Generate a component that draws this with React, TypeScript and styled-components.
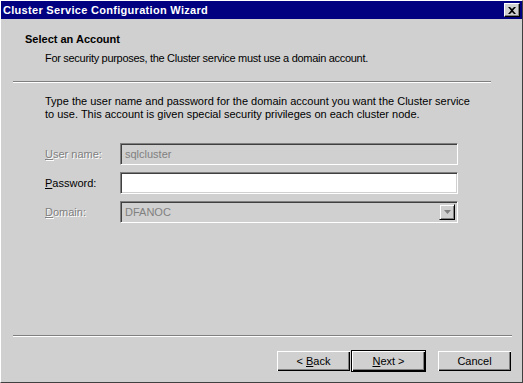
import React from "react";
import styled, { createGlobalStyle } from "styled-components";

const Global = createGlobalStyle`
  html, body { margin: 0; padding: 0; background: #d0d0d0; }
  body { font-family: "Liberation Sans", Arial, sans-serif; font-size: 11px; color: #000; }
  * { box-sizing: border-box; }
`;

const Window = styled.div`
  width: 523px;
  height: 383px;
  background: #d0d0d0;
  border-left: 1px solid #ffffff;
  border-top: 1px solid #ffffff;
  border-right: 1px solid #404040;
  border-bottom: 1px solid #404040;
  display: flex;
  flex-direction: column;
`;

const TitleBar = styled.div`
  height: 18px;
  background: #000080;
  display: flex;
  align-items: center;
  justify-content: space-between;
  padding: 0 2px 0 2px;
`;

const Title = styled.div`
  color: #fff;
  font-weight: bold;
  font-size: 11px;
  letter-spacing: 0.3px;
`;

const CloseButton = styled.div`
  width: 16px;
  height: 14px;
  background: #d0d0d0;
  border-top: 1px solid #fff;
  border-left: 1px solid #fff;
  border-right: 1px solid #000;
  border-bottom: 1px solid #000;
  box-shadow: inset -1px -1px 0 #808080;
  display: flex;
  align-items: center;
  justify-content: center;
`;

const Header = styled.div`
  padding: 14px 0 0 24px;
  height: 62px;
`;

const HeaderTitle = styled.div`
  font-weight: bold;
  font-size: 11px;
  line-height: 13px;
`;

const HeaderSub = styled.div`
  margin-top: 6px;
  padding-left: 20px;
  line-height: 13px;
  letter-spacing: -0.3px;
`;

const Separator = styled.div<{ $right: number }>`
  margin: 0 ${(p) => p.$right}px 0 12px;
  height: 2px;
  border-top: 1px solid #808080;
  border-bottom: 1px solid #ffffff;
`;

const Body = styled.div`
  flex: 1;
  padding: 12px 0 0 44px;
`;

const Intro = styled.div`
  line-height: 13px;
  width: 436px;
`;

const Form = styled.div`
  margin-top: 22px;
  display: grid;
  grid-template-columns: 75px 338px;
  row-gap: 7px;
  align-items: center;
`;

const Label = styled.div<{ $disabled?: boolean }>`
  color: ${(p) => (p.$disabled ? "#808080" : "#000")};
  text-shadow: ${(p) => (p.$disabled ? "1px 1px 0 #fff" : "none")};
  u { text-decoration: underline; }
`;

const Field = styled.div<{ $disabled?: boolean }>`
  height: 22px;
  background: ${(p) => (p.$disabled ? "#d0d0d0" : "#fff")};
  border-top: 1px solid #808080;
  border-left: 1px solid #808080;
  border-right: 1px solid #fff;
  border-bottom: 1px solid #fff;
  box-shadow: inset 1px 1px 0 #404040, inset -1px -1px 0 #d0d0d0;
  color: #808080;
  display: flex;
  align-items: center;
  justify-content: space-between;
  padding: 0 2px 0 4px;
`;

const DropButton = styled.div`
  width: 16px;
  height: 16px;
  background: #d0d0d0;
  border-top: 1px solid #d0d0d0;
  border-left: 1px solid #d0d0d0;
  border-right: 1px solid #000;
  border-bottom: 1px solid #000;
  box-shadow: inset 1px 1px 0 #fff, inset -1px -1px 0 #808080;
  display: flex;
  align-items: center;
  justify-content: center;
`;

const Footer = styled.div`
  height: 45px;
  display: flex;
  justify-content: flex-end;
  align-items: flex-start;
  padding: 13px 10px 0 0;
`;

const Button = styled.div<{ $default?: boolean; $gap?: number }>`
  width: 75px;
  height: 22px;
  margin-left: ${(p) => p.$gap ?? 0}px;
  display: flex;
  align-items: center;
  justify-content: center;
  background: #d0d0d0;
  border: 1px solid ${(p) => (p.$default ? "#000" : "transparent")};
  box-shadow: inset 1px 1px 0 #fff, inset -1px -1px 0 #000, inset -2px -2px 0 #808080;
`;

export default function App() {
  return (
    <>
      <Global />
      <Window>
        <TitleBar>
          <Title>Cluster Service Configuration Wizard</Title>
          <CloseButton>
            <svg width="8" height="7" viewBox="0 0 8 7">
              <path d="M0 0h2l2 2 2-2h2L5 3.5 8 7H6L4 5 2 7H0l3-3.5z" fill="#000" />
            </svg>
          </CloseButton>
        </TitleBar>
        <Header>
          <HeaderTitle>Select an Account</HeaderTitle>
          <HeaderSub>For security purposes, the Cluster service must use a domain account.</HeaderSub>
        </Header>
        <Separator $right={31} />
        <Body>
          <Intro>
            Type the user name and password for the domain account you want the Cluster service
            to use. This account is given special security privileges on each cluster node.
          </Intro>
          <Form>
            <Label $disabled>
              <u>U</u>ser name:
            </Label>
            <Field $disabled>sqlcluster</Field>
            <Label>
              <u>P</u>assword:
            </Label>
            <Field />
            <Label $disabled>
              <u>D</u>omain:
            </Label>
            <Field $disabled>
              DFANOC
              <DropButton>
                <svg width="7" height="4" viewBox="0 0 7 4">
                  <path d="M0 0h7L3.5 4z" fill="#808080" />
                </svg>
              </DropButton>
            </Field>
          </Form>
        </Body>
        <Separator $right={10} />
        <Footer>
          <Button>
            &lt;&nbsp;<u>B</u>ack
          </Button>
          <Button $default>
            <u>N</u>ext&nbsp;&gt;
          </Button>
          <Button $gap={11}>Cancel</Button>
        </Footer>
      </Window>
    </>
  );
}
